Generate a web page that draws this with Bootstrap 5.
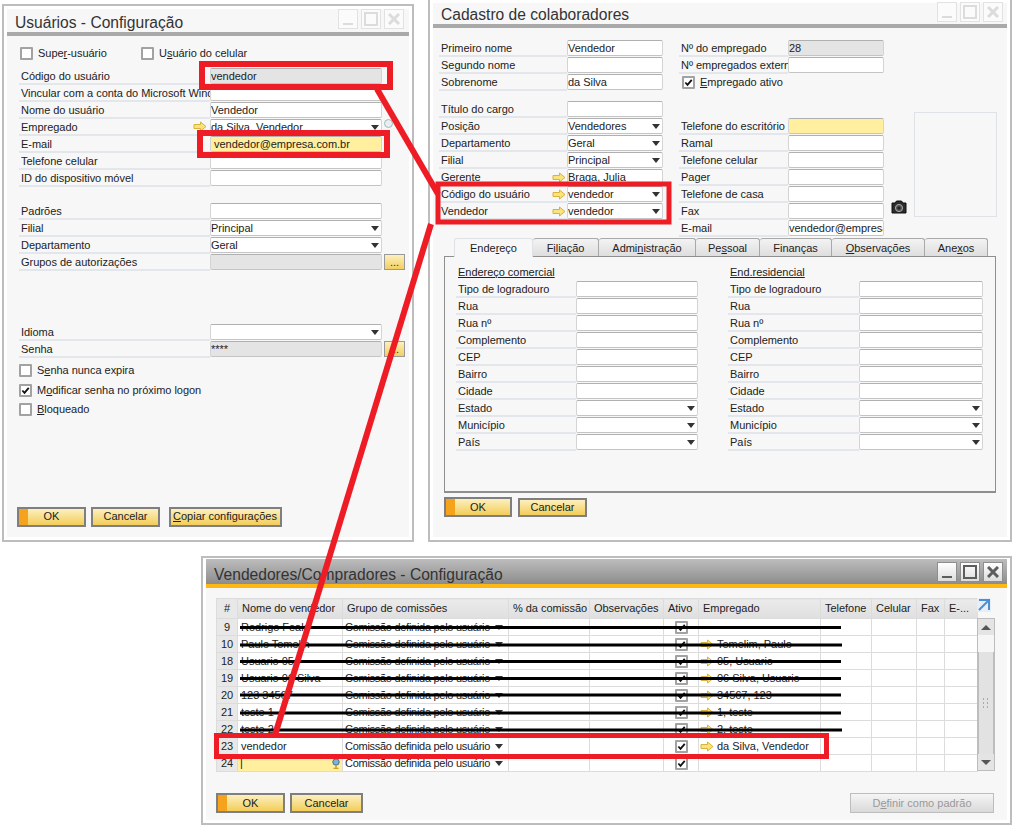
<!DOCTYPE html>
<html lang="pt-BR">
<head>
<meta charset="utf-8">
<title>SAP Business One</title>
<link href="https://cdn.jsdelivr.net/npm/bootstrap@5.3.0/dist/css/bootstrap.min.css" rel="stylesheet">
<style>
html,body{margin:0;background:#fff;}
body{font-family:"Liberation Sans",Arial,sans-serif;font-size:11px;line-height:1;color:#222;letter-spacing:-.03px;}
.desk{position:relative;width:1017px;height:829px;overflow:hidden;}
.win{position:absolute;border:2px solid #bdbdbd;background:#f7f7f7;box-shadow:inset 0 0 0 3px #fff;}
.win-a{left:2px;top:4px;width:412px;height:538px;}
.win-b{left:428px;top:-2px;width:584px;height:544px;}
.win-c{left:201px;top:556px;width:811px;height:269px;}
.win-head{height:30px;margin:0 3px;padding:0 9px 0 8px;border-bottom:4px solid #a9a9a9;}
.win-a .win-head{padding-right:5px;}
.win-b .win-head{height:28px;margin-top:0;padding-right:4px;padding-left:8px;}
.win-c .win-head{height:29px;margin:1px 3px 0;padding:0 4px 0 8px;border-bottom:4px solid #fdb813;background:linear-gradient(#bdbdbd,#8c8c8c);}
.win-name{font-size:15.600px;letter-spacing:0;color:#333;padding-top:7px;white-space:nowrap;}
.win-b .win-name{padding-top:5px;}
.win-ctl{display:flex;justify-content:center;align-items:center;width:20px;height:20px;border:1px solid #e2e2e2;background:#fbfbfb;margin-left:3px;}
.win-ctl svg{display:block;}
.win-c .win-ctl{border-color:#8e8e8e;background:linear-gradient(#fff,#dcdcdc);}
.fade-ico{stroke:#dcdcdc;fill:none;}
.win-c .fade-ico{stroke:#5d5d5d;}
.frow{height:17px;}
.flab{height:17px;padding:3px 0 0 2px;border-bottom:2px solid #e3e6ea;white-space:nowrap;overflow:hidden;flex:none;}
.ffield{display:flex;align-items:center;height:16px;flex:none;padding:0 1px 0 0!important;font-size:11px!important;line-height:1!important;color:#222;min-height:0!important;border:1px solid #d4d4d4!important;border-top-color:#b0b0b0!important;border-bottom-color:#c4c4c4!important;border-radius:2px!important;background-color:#fff;white-space:nowrap;overflow:hidden;}
.f-off{background-color:#e4e4e4!important;}
.f-hi{background-color:#ffef9e!important;padding-left:3px!important;}
.caret-d{flex:none;width:0;height:0;margin-left:auto;margin-right:1px;border-left:4px solid transparent;border-right:4px solid transparent;border-top:5px solid #333;}
.arr{flex:none;display:block;}
.dots{width:21px;height:16px;padding:0!important;margin-left:2px;font-size:11px!important;line-height:8px!important;border:1px solid #999!important;border-radius:0!important;background:linear-gradient(#fdf0bd,#f3cf5f)!important;color:#333!important;}
.sap-btn{height:20px;padding:0 2px!important;font-size:11px!important;line-height:1!important;letter-spacing:0;color:#222!important;border:2px solid #7f7f7f!important;border-radius:0!important;background:linear-gradient(#fcf0c0,#f3cd58)!important;white-space:nowrap;overflow:hidden;}
.sap-ok{background:linear-gradient(90deg,#f5a21c 9px,transparent 9px),linear-gradient(#fcf0c0,#f3cd58)!important;}
.sap-off{border:1px solid #bdbdbd!important;background:linear-gradient(#f5f5f5,#d9d9d9)!important;color:#999!important;opacity:1!important;}
.chk{width:13px!important;height:13px!important;margin:0!important;flex:none;float:none!important;border:2px solid #a2a2a2!important;border-radius:1px!important;background-color:#fff!important;}
.chk:checked{background-image:url("data:image/svg+xml,%3csvg xmlns='http://www.w3.org/2000/svg' viewBox='0 0 10 10'%3e%3cpath fill='none' stroke='%23111' stroke-width='2' d='M1.5 5l2.4 2.6L8.6 2'/%3e%3c/svg%3e")!important;background-size:100%;}
/* window A */
.a-body{padding:9px 0 0 15px;}
.a-top{height:17px;padding-left:1px;}
.a-top .chk{margin-right:5px!important;}
.a-top-1{width:121px;}
.w-a-lab{width:191px;}
.w-a-fld{width:172px;}
.w-a-arrow{margin:-1px 3px 0 auto;}
.a-gap-s{margin-top:6px;}
.a-gap{height:16px;}
.a-gap-l{height:53px;}
.a-checks{margin-top:3px;}
.a-chk-row{height:19.500px;}
.a-chk-row .chk{margin-right:5px!important;}
.a-btns{margin-top:87px;margin-left:-2px;}
.a-btn-1{width:69px;}
.a-btn-2{width:69px;margin-left:5px;}
.a-btn-3{width:113px;margin-left:9px;text-align:left;}
.mini-round{width:9px;height:9px;border-radius:50%;border:1px solid #9bb;background:#e9eef3;margin-left:2px;}
/* window B */
.b-body{padding:12px 0 0 9px;}
.w-b-lab{width:128px;}
.w-b-fld{width:96px;}
.w-c2-lab{width:109px;padding-right:5px;}
.w-c2-fld{width:96px;}
.b-col1{width:226px;}
.b-col2{width:205px;margin-left:14px;}
.b-gap{height:10px;}
.b-gap2{height:27px;}
.b-chk{height:17px;padding-left:3px;}
.b-chk .chk{margin-right:5px!important;}
.b-arrow{margin:0 1px 0 auto;}
.b-side{width:112px;margin-left:7px;padding-top:72px;}
.cam-wrap{width:23px;padding-top:87px;}
.photo{width:83px;height:105px;border:1px solid #dfe2e6;background:#f7f7f7;}
.tabs-w{margin:1px 0 0 5px;width:552px;}
.sap-tabs{padding-left:10px;border-bottom:0;flex-wrap:nowrap;gap:0;}
.sap-tabs .nav-link{height:18px;padding:4px 0 0;margin:0;font-size:11px;line-height:1;color:#222;text-align:center;border:1px solid #a9a9a9;border-bottom:0;border-left-width:0;border-radius:3px 3px 0 0;background:linear-gradient(#f3f3f3,#dedede);}
.sap-tabs .nav-link.active{background:#f7f7f7;color:#222;border-left-width:1px;height:19px;margin-bottom:-1px;position:relative;}
.t1{width:79px;}.t2{width:66px;}.t3{width:97px;}.t4{width:64px;}.t5{width:72px;}.t6{width:93px;}.t7{width:63px;}
.tab-box{height:237px;border:1px solid #8f8f8f;border-bottom-width:2px;padding:7px 0 0 11px;}
.adr-left{width:242px;}
.adr-right{width:255px;margin-left:30px;}
.adr-head{height:17px;padding:3px 0 0 2px;text-decoration:underline;}
.w-l-lab{width:120px;}.w-l-fld{width:122px;}
.w-r-lab{width:131px;}.w-r-fld{width:124px;}
.b-btns{margin:4px 0 0;}
.b-b1{width:68px;}
.b-b2{width:69px;margin-left:6px;margin-top:1px;height:19px;}
/* window C */
.c-body{padding:10px 0 0 13px;}
.grid-w{width:761px;}
table.sbo-grid{table-layout:fixed;width:761px;margin:0;border-collapse:collapse;border:1px solid #d8d8d8;background:#fff;--bs-table-bg:transparent;}
table.sbo-grid th,table.sbo-grid td{height:17px;padding:0 3px;font-size:11px;font-weight:400;color:#222;line-height:1;border:1px solid #dcdcdc;white-space:nowrap;overflow:hidden;vertical-align:middle;box-shadow:none;}
table.sbo-grid th{height:20px;background:linear-gradient(#ebebeb,#dfdfdf);padding-left:4px;}
table.sbo-grid td.numc,table.sbo-grid th.numc{background:#e8e8e8;text-align:center;padding:0;}
.c1{width:21px;}.c2{width:105px;}.c3{width:166px;}.c4{width:81px;}.c5{width:74px;}.c6{width:35px;}.c7{width:122px;}.c8{width:51px;}.c9{width:45px;}.c10{width:28px;}.c11{width:33px;}
.cg{display:flex;align-items:center;margin-left:-1px;}
.cg>span{letter-spacing:-.28px;}
.cg .caret-d{margin-right:2px;}
table.sbo-grid td.hi{background:#ffef9e;padding-right:1px;}
table.sbo-grid td.ck-c{text-align:center;padding:0;}
.ck-c .chk{display:block;margin:0 auto!important;}
.emp-c{display:flex;align-items:center;gap:3px;margin-left:-2px;}
.exp-ico{display:block;}
.sb{width:18px;height:153px;margin-top:6px;border:1px solid #bdbdbd;background:#f2f2f2;}
.sb-btn{height:16px;display:flex;align-items:center;justify-content:center;background:#e4e4e4;}
.sb-sp{height:17px;background:#f6f6f6;}
.sb-th{flex:1;background:#e2e2e2;border-left:1px solid #bdbdbd;border-right:1px solid #bdbdbd;display:flex;align-items:center;justify-content:center;}
.up-t{width:0;height:0;border-left:5px solid transparent;border-right:5px solid transparent;border-bottom:5px solid #555;}
.dn-t{width:0;height:0;border-left:5px solid transparent;border-right:5px solid transparent;border-top:5px solid #555;}
.c-btns{margin-top:21px;width:779px;}
.c-b1{width:69px;}
.c-b2{width:73px;margin-left:5px;}
.c-b3{width:144px;height:20px;margin-left:auto;margin-right:1px;}
.grip{display:block;}
.paint{position:absolute;left:0;top:0;pointer-events:none;}
</style>
</head>
<body>
<svg width="0" height="0" class="position-absolute">
  <defs>
    <symbol id="ar" viewBox="0 0 14 11"><path d="M1 3.500h6.500V1L13 5.500 7.500 10V7.500H1z" fill="#fbe37c" stroke="#d8b23a" stroke-width="1"/></symbol>
  </defs>
</svg>
<div class="desk">

  <!-- Usuários -->
  <section class="win win-a">
    <header class="win-head d-flex align-items-center">
      <div class="win-name flex-grow-1">Usuários - Configuração</div>
      <div class="win-ctl"><svg width="12" height="12"><path class="fade-ico" stroke-width="2" d="M1 11h10"/></svg></div>
      <div class="win-ctl"><svg width="14" height="14"><rect class="fade-ico" stroke-width="2" x="1" y="1" width="12" height="12"/></svg></div>
      <div class="win-ctl"><svg width="12" height="12"><path class="fade-ico" stroke-width="3" d="M1 1l10 10M11 1L1 11"/></svg></div>
    </header>
    <div class="a-body">
      <div class="a-top d-flex align-items-center">
        <div class="a-top-1 d-flex align-items-center"><input class="form-check-input chk" type="checkbox"><span>Supe<u>r</u>-usuário</span></div>
        <input class="form-check-input chk" type="checkbox"><span>U<u>s</u>uário do celular</span>
      </div>
      <div class="a-gap-s"></div>
      <div class="frow d-flex"><div class="flab w-a-lab">Código do usuário</div><div class="form-control ffield f-off w-a-fld">vendedor</div></div>
      <div class="frow d-flex"><div class="flab w-a-lab">Vincular com a conta do Microsoft Windows</div><div class="form-control ffield w-a-fld"></div></div>
      <div class="frow d-flex"><div class="flab w-a-lab">Nome do usuário</div><div class="form-control ffield w-a-fld">Vendedor</div></div>
      <div class="frow d-flex"><div class="flab w-a-lab d-flex"><span>Empregado</span><svg class="arr w-a-arrow" width="14" height="11"><use href="#ar"/></svg></div><div class="form-control ffield w-a-fld"><span>da Silva, Vendedor</span><i class="caret-d"></i></div><div class="mini-round"></div></div>
      <div class="frow d-flex"><div class="flab w-a-lab">E-mail</div><div class="form-control ffield f-hi w-a-fld">vendedor@empresa.com.br</div></div>
      <div class="frow d-flex"><div class="flab w-a-lab">Telefone celular</div><div class="form-control ffield w-a-fld"></div></div>
      <div class="frow d-flex"><div class="flab w-a-lab">ID do dispositivo móvel</div><div class="form-control ffield w-a-fld"></div></div>
      <div class="a-gap"></div>
      <div class="frow d-flex"><div class="flab w-a-lab">Padrões</div><div class="form-control ffield w-a-fld"></div></div>
      <div class="frow d-flex"><div class="flab w-a-lab">Filial</div><div class="form-control ffield w-a-fld"><span>Principal</span><i class="caret-d"></i></div></div>
      <div class="frow d-flex"><div class="flab w-a-lab">Departamento</div><div class="form-control ffield w-a-fld"><span>Geral</span><i class="caret-d"></i></div></div>
      <div class="frow d-flex"><div class="flab w-a-lab">Grupos de autorizações</div><div class="form-control ffield f-off w-a-fld"></div><button class="btn dots" type="button">...</button></div>
      <div class="a-gap-l"></div>
      <div class="frow d-flex"><div class="flab w-a-lab">Idioma</div><div class="form-control ffield w-a-fld"><i class="caret-d"></i></div></div>
      <div class="frow d-flex"><div class="flab w-a-lab">Senha</div><div class="form-control ffield f-off w-a-fld">****</div><button class="btn dots" type="button">...</button></div>
      <div class="a-checks">
        <div class="a-chk-row d-flex align-items-center"><input class="form-check-input chk" type="checkbox"><span>S<u>e</u>nha nunca expira</span></div>
        <div class="a-chk-row d-flex align-items-center"><input class="form-check-input chk" type="checkbox" checked><span>M<u>o</u>dificar senha no próximo logon</span></div>
        <div class="a-chk-row d-flex align-items-center"><input class="form-check-input chk" type="checkbox"><span><u>B</u>loqueado</span></div>
      </div>
      <div class="a-btns d-flex">
        <button class="btn sap-btn sap-ok a-btn-1" type="button">OK</button>
        <button class="btn sap-btn a-btn-2" type="button">Cancelar</button>
        <button class="btn sap-btn a-btn-3" type="button"><u>C</u>opiar configurações de</button>
      </div>
    </div>
  </section>

  <!-- Cadastro -->
  <section class="win win-b">
    <header class="win-head d-flex align-items-center">
      <div class="win-name flex-grow-1">Cadastro de colaboradores</div>
      <div class="win-ctl"><svg width="12" height="12"><path class="fade-ico" stroke-width="2" d="M1 11h10"/></svg></div>
      <div class="win-ctl"><svg width="14" height="14"><rect class="fade-ico" stroke-width="2" x="1" y="1" width="12" height="12"/></svg></div>
      <div class="win-ctl"><svg width="12" height="12"><path class="fade-ico" stroke-width="3" d="M1 1l10 10M11 1L1 11"/></svg></div>
    </header>
    <div class="b-body">
      <div class="d-flex">
        <div class="b-col1">
          <div class="frow d-flex"><div class="flab w-b-lab">Primeiro nome</div><div class="form-control ffield w-b-fld">Vendedor</div></div>
          <div class="frow d-flex"><div class="flab w-b-lab">Segundo nome</div><div class="form-control ffield w-b-fld"></div></div>
          <div class="frow d-flex"><div class="flab w-b-lab">Sobrenome</div><div class="form-control ffield w-b-fld">da Silva</div></div>
          <div class="b-gap"></div>
          <div class="frow d-flex"><div class="flab w-b-lab">Título do cargo</div><div class="form-control ffield w-b-fld"></div></div>
          <div class="frow d-flex"><div class="flab w-b-lab">Posição</div><div class="form-control ffield w-b-fld"><span>Vendedores</span><i class="caret-d"></i></div></div>
          <div class="frow d-flex"><div class="flab w-b-lab">Departamento</div><div class="form-control ffield w-b-fld"><span>Geral</span><i class="caret-d"></i></div></div>
          <div class="frow d-flex"><div class="flab w-b-lab">Filial</div><div class="form-control ffield w-b-fld"><span>Principal</span><i class="caret-d"></i></div></div>
          <div class="frow d-flex"><div class="flab w-b-lab d-flex"><span>Gerente</span><svg class="arr b-arrow" width="14" height="11"><use href="#ar"/></svg></div><div class="form-control ffield w-b-fld">Braga, Julia</div></div>
          <div class="frow d-flex"><div class="flab w-b-lab d-flex"><span>Código do usuário</span><svg class="arr b-arrow" width="14" height="11"><use href="#ar"/></svg></div><div class="form-control ffield w-b-fld"><span>vendedor</span><i class="caret-d"></i></div></div>
          <div class="frow d-flex"><div class="flab w-b-lab d-flex"><span>Vendedor</span><svg class="arr b-arrow" width="14" height="11"><use href="#ar"/></svg></div><div class="form-control ffield w-b-fld"><span>vendedor</span><i class="caret-d"></i></div></div>
        </div>
        <div class="b-col2">
          <div class="frow d-flex"><div class="flab w-c2-lab">Nº do empregado</div><div class="form-control ffield f-off w-c2-fld">28</div></div>
          <div class="frow d-flex"><div class="flab w-c2-lab">Nº empregados externos</div><div class="form-control ffield w-c2-fld"></div></div>
          <div class="b-chk d-flex align-items-center"><input class="form-check-input chk" type="checkbox" checked><span><u>E</u>mpregado ativo</span></div>
          <div class="b-gap2"></div>
          <div class="frow d-flex"><div class="flab w-c2-lab">Telefone do escritório</div><div class="form-control ffield f-hi w-c2-fld"></div></div>
          <div class="frow d-flex"><div class="flab w-c2-lab">Ramal</div><div class="form-control ffield w-c2-fld"></div></div>
          <div class="frow d-flex"><div class="flab w-c2-lab">Telefone celular</div><div class="form-control ffield w-c2-fld"></div></div>
          <div class="frow d-flex"><div class="flab w-c2-lab">Pager</div><div class="form-control ffield w-c2-fld"></div></div>
          <div class="frow d-flex"><div class="flab w-c2-lab">Telefone de casa</div><div class="form-control ffield w-c2-fld"></div></div>
          <div class="frow d-flex"><div class="flab w-c2-lab">Fax</div><div class="form-control ffield w-c2-fld"></div></div>
          <div class="frow d-flex"><div class="flab w-c2-lab">E-mail</div><div class="form-control ffield w-c2-fld">vendedor@empresa.com.br</div></div>
        </div>
        <div class="b-side d-flex">
          <div class="cam-wrap"><svg width="16" height="16" viewBox="0 0 16 16"><path d="M1 4h3l1.500-2h5L12 4h3v10H1z" fill="#2b2b2b" stroke="#111"/><circle cx="8" cy="9" r="3.600" fill="#555" stroke="#aaa"/><circle cx="8" cy="9" r="1.600" fill="#222"/></svg></div>
          <div class="photo"></div>
        </div>
      </div>
      <div class="tabs-w">
        <ul class="nav nav-tabs sap-tabs">
          <li class="nav-item"><a class="nav-link active t1" href="#">Ende<u>r</u>eço</a></li>
          <li class="nav-item"><a class="nav-link t2" href="#">Fi<u>l</u>iação</a></li>
          <li class="nav-item"><a class="nav-link t3" href="#">Admi<u>n</u>istração</a></li>
          <li class="nav-item"><a class="nav-link t4" href="#">Pe<u>s</u>soal</a></li>
          <li class="nav-item"><a class="nav-link t5" href="#">Finanças</a></li>
          <li class="nav-item"><a class="nav-link t6" href="#"><u>O</u>bservações</a></li>
          <li class="nav-item"><a class="nav-link t7" href="#">Ane<u>x</u>os</a></li>
        </ul>
        <div class="tab-box d-flex">
          <div class="adr-left">
            <div class="adr-head">Endereço comercial</div>
            <div class="frow d-flex"><div class="flab w-l-lab">Tipo de logradouro</div><div class="form-control ffield w-l-fld"></div></div>
            <div class="frow d-flex"><div class="flab w-l-lab">Rua</div><div class="form-control ffield w-l-fld"></div></div>
            <div class="frow d-flex"><div class="flab w-l-lab">Rua nº</div><div class="form-control ffield w-l-fld"></div></div>
            <div class="frow d-flex"><div class="flab w-l-lab">Complemento</div><div class="form-control ffield w-l-fld"></div></div>
            <div class="frow d-flex"><div class="flab w-l-lab">CEP</div><div class="form-control ffield w-l-fld"></div></div>
            <div class="frow d-flex"><div class="flab w-l-lab">Bairro</div><div class="form-control ffield w-l-fld"></div></div>
            <div class="frow d-flex"><div class="flab w-l-lab">Cidade</div><div class="form-control ffield w-l-fld"></div></div>
            <div class="frow d-flex"><div class="flab w-l-lab">Estado</div><div class="form-control ffield w-l-fld"><i class="caret-d"></i></div></div>
            <div class="frow d-flex"><div class="flab w-l-lab">Município</div><div class="form-control ffield w-l-fld"><i class="caret-d"></i></div></div>
            <div class="frow d-flex"><div class="flab w-l-lab">País</div><div class="form-control ffield w-l-fld"><i class="caret-d"></i></div></div>
          </div>
          <div class="adr-right">
            <div class="adr-head">End.residencial</div>
            <div class="frow d-flex"><div class="flab w-r-lab">Tipo de logradouro</div><div class="form-control ffield w-r-fld"></div></div>
            <div class="frow d-flex"><div class="flab w-r-lab">Rua</div><div class="form-control ffield w-r-fld"></div></div>
            <div class="frow d-flex"><div class="flab w-r-lab">Rua nº</div><div class="form-control ffield w-r-fld"></div></div>
            <div class="frow d-flex"><div class="flab w-r-lab">Complemento</div><div class="form-control ffield w-r-fld"></div></div>
            <div class="frow d-flex"><div class="flab w-r-lab">CEP</div><div class="form-control ffield w-r-fld"></div></div>
            <div class="frow d-flex"><div class="flab w-r-lab">Bairro</div><div class="form-control ffield w-r-fld"></div></div>
            <div class="frow d-flex"><div class="flab w-r-lab">Cidade</div><div class="form-control ffield w-r-fld"></div></div>
            <div class="frow d-flex"><div class="flab w-r-lab">Estado</div><div class="form-control ffield w-r-fld"><i class="caret-d"></i></div></div>
            <div class="frow d-flex"><div class="flab w-r-lab">Município</div><div class="form-control ffield w-r-fld"><i class="caret-d"></i></div></div>
            <div class="frow d-flex"><div class="flab w-r-lab">País</div><div class="form-control ffield w-r-fld"><i class="caret-d"></i></div></div>
          </div>
        </div>
        <div class="b-btns d-flex align-items-start">
          <button class="btn sap-btn sap-ok b-b1" type="button">OK</button>
          <button class="btn sap-btn b-b2" type="button">Cancelar</button>
        </div>
      </div>
    </div>
  </section>

  <!-- Vendedores -->
  <section class="win win-c">
    <header class="win-head d-flex align-items-center">
      <div class="win-name flex-grow-1">Vendedores/Compradores - Configuração</div>
      <div class="win-ctl"><svg width="12" height="12"><path class="fade-ico" stroke-width="2" d="M1 11h10"/></svg></div>
      <div class="win-ctl"><svg width="14" height="14"><rect class="fade-ico" stroke-width="2" x="1" y="1" width="12" height="12"/></svg></div>
      <div class="win-ctl"><svg width="12" height="12"><path class="fade-ico" stroke-width="3" d="M1 1l10 10M11 1L1 11"/></svg></div>
    </header>
    <div class="c-body">
      <div class="d-flex">
        <div class="grid-w">
          <table class="table sbo-grid">
            <colgroup><col class="c1"><col class="c2"><col class="c3"><col class="c4"><col class="c5"><col class="c6"><col class="c7"><col class="c8"><col class="c9"><col class="c10"><col class="c11"></colgroup>
            <thead><tr><th class="numc">#</th><th>Nome do vendedor</th><th>Grupo de comissões</th><th>% da comissão</th><th>Observações</th><th>Ativo</th><th>Empregado</th><th>Telefone</th><th>Celular</th><th>Fax</th><th>E-...</th></tr></thead>
            <tbody>
              <tr><td class="numc">9</td><td>Rodrigo Feale</td><td><div class="cg"><span>Comissão definida pelo usuário</span><i class="caret-d"></i></div></td><td></td><td></td><td class="ck-c"><input class="form-check-input chk" type="checkbox" checked></td><td></td><td></td><td></td><td></td><td></td></tr>
              <tr><td class="numc">10</td><td>Paulo Tomelin</td><td><div class="cg"><span>Comissão definida pelo usuário</span><i class="caret-d"></i></div></td><td></td><td></td><td class="ck-c"><input class="form-check-input chk" type="checkbox" checked></td><td><div class="emp-c"><svg class="arr" width="14" height="11"><use href="#ar"/></svg><span>Tomelim, Paulo</span></div></td><td></td><td></td><td></td><td></td></tr>
              <tr><td class="numc">18</td><td>Usuario 05</td><td><div class="cg"><span>Comissão definida pelo usuário</span><i class="caret-d"></i></div></td><td></td><td></td><td class="ck-c"><input class="form-check-input chk" type="checkbox" checked></td><td><div class="emp-c"><svg class="arr" width="14" height="11"><use href="#ar"/></svg><span>05, Usuario</span></div></td><td></td><td></td><td></td><td></td></tr>
              <tr><td class="numc">19</td><td>Usuario 06 Silva</td><td><div class="cg"><span>Comissão definida pelo usuário</span><i class="caret-d"></i></div></td><td></td><td></td><td class="ck-c"><input class="form-check-input chk" type="checkbox" checked></td><td><div class="emp-c"><svg class="arr" width="14" height="11"><use href="#ar"/></svg><span>06 Silva, Usuario</span></div></td><td></td><td></td><td></td><td></td></tr>
              <tr><td class="numc">20</td><td>123 34567</td><td><div class="cg"><span>Comissão definida pelo usuário</span><i class="caret-d"></i></div></td><td></td><td></td><td class="ck-c"><input class="form-check-input chk" type="checkbox" checked></td><td><div class="emp-c"><svg class="arr" width="14" height="11"><use href="#ar"/></svg><span>34567, 123</span></div></td><td></td><td></td><td></td><td></td></tr>
              <tr><td class="numc">21</td><td>teste 1</td><td><div class="cg"><span>Comissão definida pelo usuário</span><i class="caret-d"></i></div></td><td></td><td></td><td class="ck-c"><input class="form-check-input chk" type="checkbox" checked></td><td><div class="emp-c"><svg class="arr" width="14" height="11"><use href="#ar"/></svg><span>1, teste</span></div></td><td></td><td></td><td></td><td></td></tr>
              <tr><td class="numc">22</td><td>teste 2</td><td><div class="cg"><span>Comissão definida pelo usuário</span><i class="caret-d"></i></div></td><td></td><td></td><td class="ck-c"><input class="form-check-input chk" type="checkbox" checked></td><td><div class="emp-c"><svg class="arr" width="14" height="11"><use href="#ar"/></svg><span>2, teste</span></div></td><td></td><td></td><td></td><td></td></tr>
              <tr><td class="numc">23</td><td>vendedor</td><td><div class="cg"><span>Comissão definida pelo usuário</span><i class="caret-d"></i></div></td><td></td><td></td><td class="ck-c"><input class="form-check-input chk" type="checkbox" checked></td><td><div class="emp-c"><svg class="arr" width="14" height="11"><use href="#ar"/></svg><span>da Silva, Vendedor</span></div></td><td></td><td></td><td></td><td></td></tr>
              <tr><td class="numc">24</td><td class="hi"><div class="cg"><span>|</span><svg class="ms-auto" width="10" height="11" viewBox="0 0 10 11"><circle cx="5" cy="4" r="3.200" fill="#7fb2d6" stroke="#41708f"/><path d="M5 8v2M2.500 10.500h5" stroke="#c9a227" stroke-width="1.500"/></svg></div></td><td><div class="cg"><span>Comissão definida pelo usuário</span><i class="caret-d"></i></div></td><td></td><td></td><td class="ck-c"><input class="form-check-input chk" type="checkbox" checked></td><td></td><td></td><td></td><td></td><td></td></tr>
            </tbody>
          </table>
        </div>
        <div class="sb-col">
          <svg class="exp-ico" width="14" height="14" viewBox="0 0 14 14"><rect width="14" height="14" fill="#e6eef8"/><path d="M2 2h10v10M12 2L2 12" fill="none" stroke="#4f8fd1" stroke-width="2"/></svg>
          <div class="sb d-flex flex-column">
            <div class="sb-btn"><i class="up-t"></i></div>
            <div class="sb-sp"></div>
            <div class="sb-th"><svg class="grip" width="8" height="10"><path d="M1 1h1M5 1h1M1 5h1M5 5h1M1 9h1M5 9h1" stroke="#aaa" stroke-width="2"/></svg></div>
            <div class="sb-btn"><i class="dn-t"></i></div>
          </div>
        </div>
      </div>
      <div class="c-btns d-flex">
        <button class="btn sap-btn sap-ok c-b1" type="button">OK</button>
        <button class="btn sap-btn c-b2" type="button">Cancelar</button>
        <button class="btn sap-btn sap-off c-b3" type="button" disabled>D<u>e</u>finir como padrão</button>
      </div>
    </div>
  </section>

  <!-- hand-drawn marks over the screenshot -->
  <svg class="paint" width="1017" height="829" viewBox="0 0 1017 829">
    <g stroke="#000" stroke-width="3">
      <path d="M240 627.500H841M240 645H842M240 661.500H841M240 678.500H841M240 695H841M240 713H841M240 730H842"/>
    </g>
    <g fill="none" stroke="#ee1c25">
      <rect x="202" y="64" width="188" height="23" stroke-width="6"/>
      <rect x="200" y="133" width="187" height="22" stroke-width="6"/>
      <rect x="438" y="184" width="231" height="38" stroke-width="5"/>
      <rect x="216.500" y="735.500" width="610" height="21" stroke-width="5"/>
      <path d="M377 89L438 194" stroke-width="6"/>
      <path d="M431 224L275 735" stroke-width="6"/>
    </g>
  </svg>
</div>
<script src="https://cdn.jsdelivr.net/npm/bootstrap@5.3.0/dist/js/bootstrap.bundle.min.js"></script>
</body>
</html>
